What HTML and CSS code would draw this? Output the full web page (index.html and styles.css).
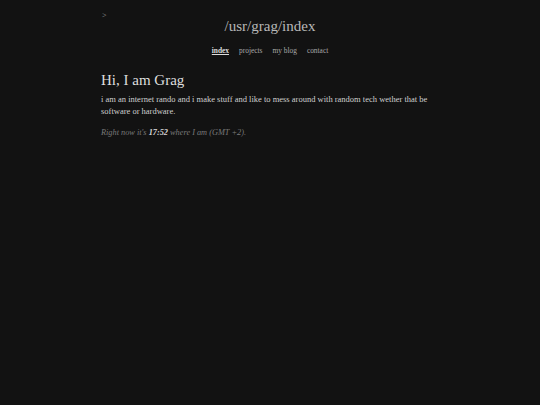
FILE: index.html
```html
<!DOCTYPE html>
<html>
<head>
<meta charset="utf-8">
<link rel="stylesheet" href="styles.css">
</head>
<body>
<div class="page">
  <div class="prompt">&gt;</div>
  <header class="header">
    <h1 class="title">/usr/grag/index</h1>
    <nav class="nav">
      <a class="nav-link active" href="#">index</a>
      <a class="nav-link" href="#">projects</a>
      <a class="nav-link" href="#">my blog</a>
      <a class="nav-link" href="#">contact</a>
    </nav>
  </header>
  <main class="content">
    <h2 class="heading">Hi, I am Grag</h2>
    <p class="intro">i am an internet rando and i make stuff and like to mess around with random tech wether that be software or hardware.</p>
    <p class="time">Right now it's <strong class="clock">17:52</strong> where I am (GMT +2).</p>
  </main>
</div>
</body>
</html>
```
FILE: styles.css
```css
html, body {
  margin: 0;
  padding: 0;
  background: #121212;
}
body {
  font-family: "Liberation Serif", "DejaVu Serif", serif;
  color: #c8c8c8;
  height: 405px;
}
.page {
  width: 338px;
  margin: 0 auto;
  padding-top: 12px;
}
.prompt {
  font-size: 8px;
  line-height: 8px;
  color: #9a9a9a;
  margin-left: 1px;
}
.header {
  text-align: center;
}
.title {
  margin: 0;
  font-weight: normal;
  font-size: 15px;
  line-height: 13px;
  color: #b8b8b8;
}
.nav {
  margin-top: 13px;
  display: flex;
  justify-content: center;
  gap: 10px;
  font-size: 7.4px;
}
.nav-link {
  color: #a8a8a8;
  text-decoration: none;
}
.nav-link.active {
  color: #dcdcdc;
  font-weight: bold;
  text-decoration: underline;
}
.content {
  margin-top: 15px;
}
.heading {
  margin: 0;
  font-weight: normal;
  font-size: 15px;
  line-height: 20px;
  color: #dedede;
}
.intro {
  margin: 3px 0 0;
  font-size: 8.5px;
  line-height: 12px;
  color: #cfcfcf;
}
.time {
  margin: 10px 0 0;
  font-size: 8.3px;
  line-height: 12px;
  font-style: italic;
  color: #7a7a7a;
}
.clock {
  color: #d8d8d8;
  font-weight: bold;
}
```
